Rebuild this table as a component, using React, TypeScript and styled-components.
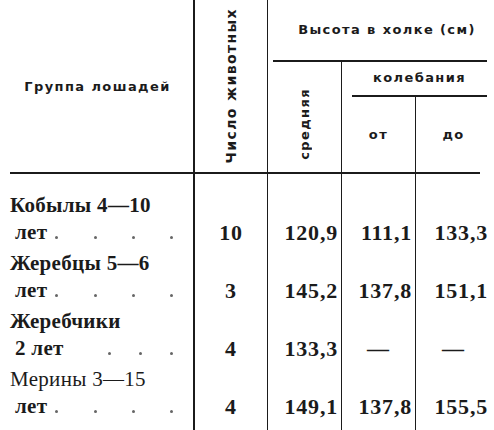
import styled, { createGlobalStyle, css } from 'styled-components';

const GlobalStyle = createGlobalStyle`
  html, body {
    margin: 0;
    padding: 0;
    background: #fff;
  }
  body {
    width: 494px;
    height: 430px;
    overflow: hidden;
    color: #1b1b1b;
  }
`;

const cols = '183px 74px 74px 74px 76px';
const ink = '#1b1b1b';

const Table = styled.div`
  margin-left: 10px;
  width: 481px;
  height: 430px;
  display: flex;
  flex-direction: column;
`;

const Head = styled.div`
  display: grid;
  grid-template-columns: ${cols};
  grid-template-rows: 62px 35px 75px;
  font-family: 'DejaVu Sans', sans-serif;
  font-weight: bold;
  font-size: 13px;
  letter-spacing: 1.4px;
  white-space: nowrap;
`;

const HeadCell = styled.div<{ $col: string; $row: string; $line?: number }>`
  grid-column: ${p => p.$col};
  grid-row: ${p => p.$row};
  display: flex;
  align-items: center;
  justify-content: center;
  box-sizing: border-box;
  ${p => p.$line && css`border-left: ${p.$line}px solid ${ink};`}
`;

const GroupLabel = styled.span`
  padding-right: 8px;
`;

const Vertical = styled.span<{ $size: number }>`
  writing-mode: vertical-rl;
  transform: rotate(180deg);
  font-size: ${p => p.$size}px;
`;

const MeanCell = styled(HeadCell)`
  align-items: flex-end;
  padding-bottom: 12px;
`;

const Spanner = styled.div<{ $inset: number }>`
  align-self: stretch;
  flex: 1;
  margin-left: ${p => p.$inset}px;
  margin-right: 4px;
  border-bottom: 2px solid ${ink};
  display: flex;
  align-items: center;
  justify-content: center;
`;

const HeightTitle = styled(Spanner)`
  padding-left: 14px;
  padding-bottom: 2px;
`;

const RangeTitle = styled(Spanner)`
  padding-bottom: 2px;
`;

const Rule = styled.div`
  height: 2px;
  width: 470px;
  background: ${ink};
`;

const Body = styled.div`
  flex: 1;
  display: flex;
  flex-direction: column;
`;

const Row = styled.div<{ $first?: boolean; $last?: boolean }>`
  display: grid;
  grid-template-columns: ${cols};
  height: ${p => (p.$first ? 76 : 58)}px;
  ${p => p.$last && css`flex: 1;`}
  & > div {
    padding-top: ${p => (p.$first ? 18 : 0)}px;
  }
`;

const NameCell = styled.div`
  font-family: 'Liberation Serif', serif;
  font-size: 21px;
  line-height: 27px;
  letter-spacing: 0.3px;
  padding-right: 20px;
  white-space: nowrap;
`;

const NameLine = styled.div<{ $light?: boolean }>`
  font-weight: ${p => (p.$light ? 'normal' : 'bold')};
`;

const YearsLine = styled.div`
  display: flex;
  align-items: flex-end;
  padding-left: 5px;
  font-weight: bold;
`;

const Dots = styled.div<{ $start: number }>`
  flex: 1;
  display: flex;
  justify-content: space-between;
  margin-left: ${p => p.$start}px;
  padding-bottom: 7px;
`;

const Dot = styled.i`
  width: 3px;
  height: 3px;
  border-radius: 50%;
  background: #666;
`;

const ValueCell = styled.div<{ $line: number; $align: 'center' | 'right' }>`
  border-left: ${p => p.$line}px solid ${ink};
  display: flex;
  justify-content: ${p => (p.$align === 'center' ? 'center' : 'flex-end')};
  padding-right: ${p => (p.$align === 'center' ? 0 : 3)}px;
  font-family: 'Liberation Serif', serif;
  font-weight: bold;
  font-size: 22px;
  letter-spacing: 0.8px;
  white-space: nowrap;
`;

const Value = styled.span`
  margin-top: 27px;
  line-height: 27px;
`;

type Horse = {
  name: string;
  years: string;
  dots: number;
  dotsStart: number;
  light?: boolean;
  count: string;
  values: string[];
};

const horses: Horse[] = [
  { name: 'Кобылы 4—10', years: 'лет', dots: 4, dotsStart: 8, count: '10', values: ['120,9', '111,1', '133,3'] },
  { name: 'Жеребцы 5—6', years: 'лет', dots: 4, dotsStart: 8, count: '3', values: ['145,2', '137,8', '151,1'] },
  { name: 'Жеребчики', years: '2 лет', dots: 3, dotsStart: 44, count: '4', values: ['133,3', '—', '—'] },
  { name: 'Мерины 3—15', years: 'лет', dots: 4, dotsStart: 8, light: true, count: '4', values: ['149,1', '137,8', '155,5'] },
];

export default function App() {
  return (
    <>
      <GlobalStyle />
      <Table>
        <Head>
          <HeadCell $col="1" $row="1 / 4">
            <GroupLabel>Группа лошадей</GroupLabel>
          </HeadCell>
          <HeadCell $col="2" $row="1 / 4" $line={2}>
            <Vertical $size={14}>Число животных</Vertical>
          </HeadCell>
          <HeadCell $col="3 / 6" $row="1" $line={1.5}>
            <HeightTitle $inset={5}>Высота в холке (см)</HeightTitle>
          </HeadCell>
          <MeanCell $col="3" $row="2 / 4" $line={1.5}>
            <Vertical $size={13}>средняя</Vertical>
          </MeanCell>
          <HeadCell $col="4 / 6" $row="2" $line={1.5}>
            <RangeTitle $inset={10}>колебания</RangeTitle>
          </HeadCell>
          <HeadCell $col="4" $row="3" $line={1.5}>от</HeadCell>
          <HeadCell $col="5" $row="3" $line={1.5}>до</HeadCell>
        </Head>
        <Rule />
        <Body>
          {horses.map((h, i) => (
            <Row key={h.name} $first={i === 0} $last={i === horses.length - 1}>
              <NameCell>
                <NameLine $light={h.light}>{h.name}</NameLine>
                <YearsLine>
                  {h.years}
                  <Dots $start={h.dotsStart}>
                    {Array.from({ length: h.dots }, (_, d) => <Dot key={d} />)}
                  </Dots>
                </YearsLine>
              </NameCell>
              <ValueCell $line={2} $align="center">
                <Value>{h.count}</Value>
              </ValueCell>
              {h.values.map((v, j) => (
                <ValueCell key={j} $line={1.5} $align={v === '—' ? 'center' : 'right'}>
                  <Value>{v}</Value>
                </ValueCell>
              ))}
            </Row>
          ))}
        </Body>
      </Table>
    </>
  );
}
